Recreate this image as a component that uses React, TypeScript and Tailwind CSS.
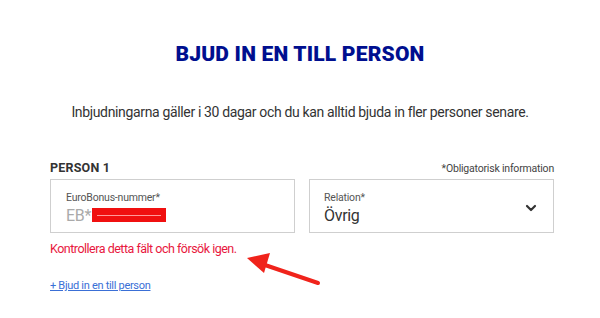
import React from "react";

export default function App() {
  return (
    <div className="w-[600px] h-[318px] bg-white overflow-hidden relative" style={{ fontFamily: "Roboto, 'Liberation Sans', sans-serif" }}>
      <div className="flex flex-col items-center pt-[42px]">
        <h1 className="text-[21px] leading-[24px] font-black tracking-[0.2px] text-[#000f8f]">BJUD IN EN TILL PERSON</h1>
        <p className="mt-[36px] text-[14px] leading-[20px] tracking-[-0.35px] text-[#333]">Inbjudningarna gäller i 30 dagar och du kan alltid bjuda in fler personer senare.</p>
      </div>
      <div className="ml-[50px] w-[504px] mt-[38px]">
        <div className="flex items-end justify-between">
          <span className="text-[12.5px] leading-[16px] font-bold text-[#333] tracking-[0.2px]">PERSON 1</span>
          <span className="text-[10.5px] leading-[14px] tracking-[-0.2px] text-[#444]">*Obligatorisk information</span>
        </div>
        <div className="flex gap-[14px] mt-[3px]">
          <div className="w-[245px] h-[54px] border border-[#cfcfcf] pl-[15px] pt-[11px]">
            <div className="text-[10.5px] leading-[14px] tracking-[-0.2px] text-[#555]">EuroBonus-nummer*</div>
            <div className="flex items-center mt-[1px]">
              <span className="text-[16px] leading-[20px] tracking-[-0.3px] text-[#aaa]">EB*</span>
              <span className="ml-[1px] mt-[-2px] w-[74px] h-[14px] bg-[#f01010] flex items-center justify-center">
                <span className="w-[64px] h-[1px] bg-[#ff9a9a]" />
              </span>
            </div>
          </div>
          <div className="w-[245px] h-[54px] border border-[#cfcfcf] pl-[14px] pr-[16px] pt-[11px] flex justify-between">
            <div>
              <div className="text-[10.5px] leading-[14px] tracking-[-0.2px] text-[#555]">Relation*</div>
              <div className="text-[16px] leading-[20px] tracking-[-0.3px] text-[#333] mt-[1px]">Övrig</div>
            </div>
            <svg width="12" height="8" viewBox="0 0 12 8" className="mt-[13px]">
              <path d="M2 2 L6 6 L10 2" stroke="#333" strokeWidth="2.2" fill="none" strokeLinecap="round" strokeLinejoin="round" />
            </svg>
          </div>
        </div>
        <div className="mt-[8px] text-[12.5px] leading-[16px] tracking-[-0.5px] text-[#e8173e]">Kontrollera detta fält och försök igen.</div>
        <a href="#" className="block mt-[22px] text-[11px] leading-[14px] tracking-[-0.3px] text-[#3a6fd6] underline">+ Bjud in en till person</a>
      </div>
      <svg className="absolute left-0 top-0" width="600" height="318" viewBox="0 0 600 318">
        <line x1="318" y1="283" x2="262" y2="264" stroke="#f0231b" strokeWidth="4" strokeLinecap="round" />
        <polygon points="247,258 270,253 264,273" fill="#f0231b" />
      </svg>
    </div>
  );
}
